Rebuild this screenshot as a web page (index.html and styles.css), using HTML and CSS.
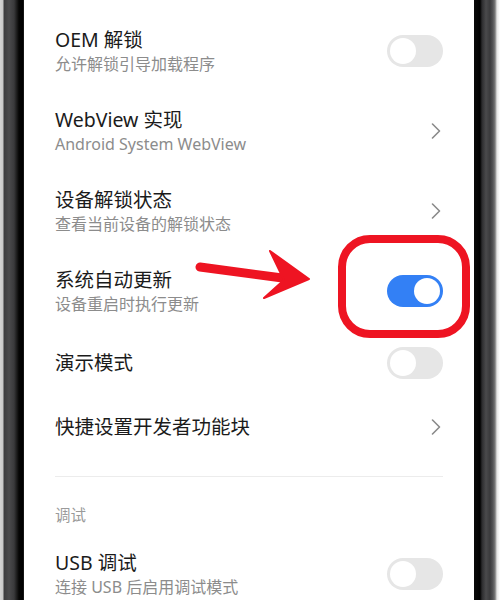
FILE: index.html
```html
<!DOCTYPE html>
<html lang="zh-CN">
<head>
<meta charset="utf-8">
<title>开发者选项</title>
<link rel="stylesheet" href="styles.css">
</head>
<body>
<div class="phone">
  <div class="bezel bezel-left"></div>
  <div class="screen">
    <div class="list">
      <div class="row">
        <div class="text">
          <div class="title">OEM 解锁</div>
          <div class="sub">允许解锁引导加载程序</div>
        </div>
        <div class="toggle"><div class="knob"></div></div>
      </div>
      <div class="row">
        <div class="text">
          <div class="title">WebView 实现</div>
          <div class="sub">Android System WebView</div>
        </div>
        <svg class="chev" width="10" height="16" viewBox="0 0 10 16"><polyline points="1.5,1 8.5,8 1.5,15" fill="none" stroke="#8a8a8a" stroke-width="1.6" stroke-linecap="round" stroke-linejoin="round"/></svg>
      </div>
      <div class="row">
        <div class="text">
          <div class="title">设备解锁状态</div>
          <div class="sub">查看当前设备的解锁状态</div>
        </div>
        <svg class="chev" width="10" height="16" viewBox="0 0 10 16"><polyline points="1.5,1 8.5,8 1.5,15" fill="none" stroke="#8a8a8a" stroke-width="1.6" stroke-linecap="round" stroke-linejoin="round"/></svg>
      </div>
      <div class="row">
        <div class="text">
          <div class="title">系统自动更新</div>
          <div class="sub">设备重启时执行更新</div>
        </div>
        <div class="toggle on"><div class="knob"></div></div>
      </div>
      <div class="row single">
        <div class="text">
          <div class="title">演示模式</div>
        </div>
        <div class="toggle"><div class="knob"></div></div>
      </div>
      <div class="row single">
        <div class="text">
          <div class="title">快捷设置开发者功能块</div>
        </div>
        <svg class="chev" width="10" height="16" viewBox="0 0 10 16"><polyline points="1.5,1 8.5,8 1.5,15" fill="none" stroke="#8a8a8a" stroke-width="1.6" stroke-linecap="round" stroke-linejoin="round"/></svg>
      </div>
      <div class="divider"></div>
      <div class="section">调试</div>
      <div class="row">
        <div class="text">
          <div class="title">USB 调试</div>
          <div class="sub">连接 USB 后启用调试模式</div>
        </div>
        <div class="toggle"><div class="knob"></div></div>
      </div>
    </div>
    <svg class="annot" width="450" height="600" viewBox="24 0 450 600">
      <line x1="200" y1="267" x2="290" y2="279" stroke="#ee1422" stroke-width="9" stroke-linecap="round"/>
      <polygon points="270,251 309,279 264,298 284,280" fill="#ee1422" stroke="#ee1422" stroke-width="2" stroke-linejoin="round"/>
      <rect x="342" y="239" width="124" height="95" rx="28" ry="28" fill="none" stroke="#ee1422" stroke-width="8"/>
    </svg>
  </div>
  <div class="bezel bezel-right"></div>
</div>
</body>
</html>
```

FILE: styles.css
```css
html, body {
  margin: 0;
  padding: 0;
  background: #ffffff;
}

.phone {
  display: flex;
  width: 500px;
  height: 600px;
  overflow: hidden;
}

.bezel {
  height: 600px;
  flex: none;
}

.bezel-left {
  width: 24px;
  background: linear-gradient(to right, #d4d4d4 0px, #c8c8c8 3px, #3c3c3e 4px, #4a4a4c 9px, #3a3a3c 14px, #1a1a1a 17px, #050505 19px, #000000 23px, #2a2a2a 24px);
}

.bezel-right {
  width: 26px;
  background: linear-gradient(to right, #0a0a0a 0px, #000000 6px, #2c2c2e 8px, #4a4a4c 12px, #3a3a3c 16px, #555557 19px, #7a7a7a 21px, #e6e6e6 23px, #ffffff 26px);
}

.screen {
  position: relative;
  width: 450px;
  height: 600px;
  background: #ffffff;
  overflow: hidden;
  flex: none;
  font-family: "Noto Sans", "Noto Sans CJK SC", sans-serif;
}

.list {
  padding-top: 11px;
}

.row {
  display: flex;
  align-items: center;
  justify-content: space-between;
  min-height: 80px;
  padding: 0 31px;
  box-sizing: border-box;
}

.row.single {
  min-height: 64px;
}

.text {
  display: flex;
  flex-direction: column;
}

.title {
  font-size: 19.5px;
  line-height: 26px;
  color: #1b1b1b;
}

.sub {
  font-size: 16px;
  line-height: 22px;
  color: #8c8c8c;
}

.toggle {
  width: 56px;
  height: 32px;
  border-radius: 16px;
  background: #e6e6e6;
  box-sizing: border-box;
  padding: 3px;
  display: flex;
  flex: none;
}

.knob {
  width: 26px;
  height: 26px;
  border-radius: 50%;
  background: #ffffff;
}

.toggle.on {
  background: #3380f5;
  justify-content: flex-end;
}

.chev {
  flex: none;
  margin-right: 2px;
}

.divider {
  height: 1px;
  background: #ececec;
  margin: 17px 31px 0;
}

.section {
  padding: 0 31px;
  font-size: 15.5px;
  line-height: 22px;
  color: #9a9a9a;
  margin-top: 27px;
  margin-bottom: 8px;
}

.annot {
  position: absolute;
  left: 0;
  top: 0;
  pointer-events: none;
}
```
